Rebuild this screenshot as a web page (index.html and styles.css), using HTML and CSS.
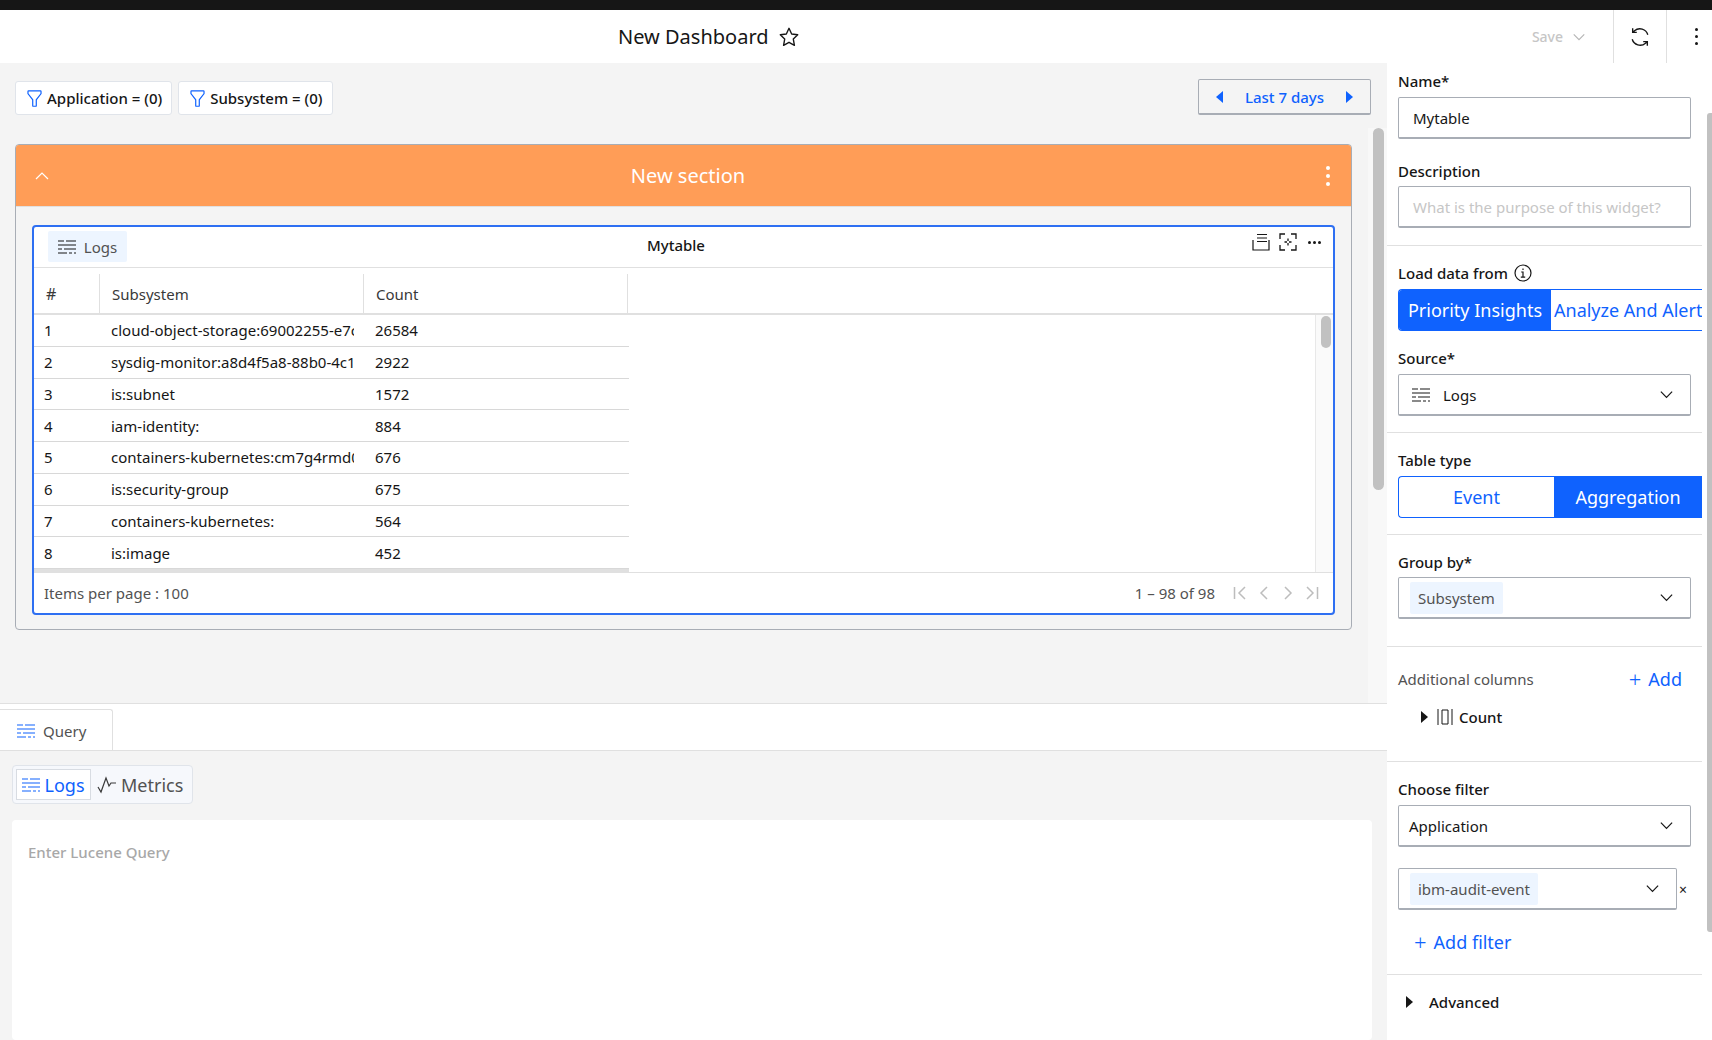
FILE: index.html
```html
<!DOCTYPE html>
<html lang="en">
<head>
  <meta charset="UTF-8" />
  <title>New Dashboard</title>
  <link rel="stylesheet" href="styles.css">
</head>
<body>
  <svg class="defs" width="0" height="0">
    <symbol id="i-logs" viewBox="0 0 18 16">
      <path d="M0 2h6M8 2h10M0 6h18M0 10h4M6 10h12M0 14h9M11 14h3M16 14h2" fill="none" stroke="currentColor" stroke-width="1.2"/>
    </symbol>
    <symbol id="i-filter" viewBox="0 0 32 32">
      <path d="M18 30h-4a2 2 0 0 1-2-2V18.4L4.6 9A2 2 0 0 1 4 7.6V4a2 2 0 0 1 2-2h20a2 2 0 0 1 2 2v3.6a2 2 0 0 1-.6 1.4L20 18.4V28a2 2 0 0 1-2 2ZM6 4v3.6l8 10V28h4V17.6l8-10V4Z" fill="currentColor"/>
    </symbol>
    <symbol id="i-chev" viewBox="0 0 16 16">
      <path d="M2 5l6 6 6-6" fill="none" stroke="currentColor" stroke-width="1.3"/>
    </symbol>
  </svg>

  <div class="topbar"></div>

  <header class="header">
    <h1 class="title">New Dashboard</h1>
    <svg class="star" viewBox="0 0 24 24"><path d="M12 2.5l2.9 6.2 6.6.9-4.8 4.7 1.2 6.8-5.9-3.3-5.9 3.3 1.2-6.8L2.5 9.6l6.6-.9z" fill="none" stroke="#161616" stroke-width="1.5" stroke-linejoin="round"/></svg>
    <div class="save">Save <svg class="save-chev"><use href="#i-chev"/></svg></div>
    <div class="head-btn">
      <svg class="renew" viewBox="0 0 24 24"><path d="M20.5 9.5A9 9 0 0 0 6 5.2L4 7M4 2.5V7h4.5M3.5 14.5A9 9 0 0 0 18 18.8l2-1.8M20 21.500V17h-4.500" fill="none" stroke="#161616" stroke-width="1.500"/></svg>
    </div>
    <div class="head-btn head-more"><span class="kebab"><i></i><i></i><i></i></span></div>
  </header>

  <div class="page">
    <main class="main">
      <section class="dash">
        <div class="toolbar">
          <div class="chip"><svg class="chip-icon"><use href="#i-filter"/></svg>Application = (0)</div>
          <div class="chip"><svg class="chip-icon"><use href="#i-filter"/></svg>Subsystem = (0)</div>
          <div class="date">
            <span class="tri tri-left"></span>
            <span class="date-text">Last 7 days</span>
            <span class="tri tri-right"></span>
          </div>
        </div>

        <div class="section">
          <div class="section-head">
            <svg class="section-chev" viewBox="0 0 16 16"><path d="M2 11l6-6 6 6" fill="none" stroke="#fff" stroke-width="1.200"/></svg>
            <span class="section-title">New section</span>
            <span class="kebab kebab-white"><i></i><i></i><i></i></span>
          </div>
          <div class="section-body">
            <div class="widget">
              <div class="widget-head">
                <div class="logs-tag"><svg class="logs-icon"><use href="#i-logs"/></svg>Logs</div>
                <div class="widget-title">Mytable</div>
                <div class="widget-tools">
                  <svg class="tool" viewBox="0 0 18 18"><path d="M5 1.500h10M5 5h10M5 8.500h10M1 7v10h16V7M1 12" fill="none" stroke="#161616" stroke-width="1.200"/></svg>
                  <svg class="tool" viewBox="0 0 18 18"><path d="M6 1H1v5M12 1h5v5M6 17H1v-5M12 17h5v-5M9 5.500v2.500M9 10v2.500M5.500 9H8M10 9h2.500" fill="none" stroke="#161616" stroke-width="1.300"/></svg>
                  <span class="dots"><i></i><i></i><i></i></span>
                </div>
              </div>
              <div class="thead">
                <div class="th th-num">#</div>
                <div class="th">Subsystem</div>
                <div class="th">Count</div>
              </div>
              <div class="tbody">
                <div class="rows">
                  <div class="row"><span class="c-num">1</span><span class="c-name">cloud-object-storage:69002255-e7c1-4a10</span><span class="c-count">26584</span></div>
                  <div class="row"><span class="c-num">2</span><span class="c-name">sysdig-monitor:a8d4f5a8-88b0-4c1e-9b21</span><span class="c-count">2922</span></div>
                  <div class="row"><span class="c-num">3</span><span class="c-name">is:subnet</span><span class="c-count">1572</span></div>
                  <div class="row"><span class="c-num">4</span><span class="c-name">iam-identity:</span><span class="c-count">884</span></div>
                  <div class="row"><span class="c-num">5</span><span class="c-name">containers-kubernetes:cm7g4rmd0abc</span><span class="c-count">676</span></div>
                  <div class="row"><span class="c-num">6</span><span class="c-name">is:security-group</span><span class="c-count">675</span></div>
                  <div class="row"><span class="c-num">7</span><span class="c-name">containers-kubernetes:</span><span class="c-count">564</span></div>
                  <div class="row"><span class="c-num">8</span><span class="c-name">is:image</span><span class="c-count">452</span></div>
                </div>
                <div class="table-track"><div class="table-thumb"></div></div>
              </div>
              <div class="tfoot">
                <span>Items per page : 100</span>
                <span class="range">1 – 98 of 98</span>
                <svg class="pager" viewBox="0 0 14 14"><path d="M1.500 1v12M12 1L6 7l6 6" fill="none" stroke="#bdbdbd" stroke-width="1.500"/></svg>
                <svg class="pager" viewBox="0 0 14 14"><path d="M10 1L4 7l6 6" fill="none" stroke="#bdbdbd" stroke-width="1.500"/></svg>
                <svg class="pager" viewBox="0 0 14 14"><path d="M4 1l6 6-6 6" fill="none" stroke="#bdbdbd" stroke-width="1.500"/></svg>
                <svg class="pager" viewBox="0 0 14 14"><path d="M12.500 1v12M2 1l6 6-6 6" fill="none" stroke="#bdbdbd" stroke-width="1.500"/></svg>
              </div>
            </div>
          </div>
        </div>
        <div class="dash-track"><div class="dash-thumb"></div></div>
      </section>

      <section class="query">
        <div class="tabbar">
          <div class="tab"><svg class="logs-icon blue"><use href="#i-logs"/></svg>Query</div>
        </div>
        <div class="query-body">
          <div class="switcher">
            <div class="switch switch-on"><svg class="logs-icon blue"><use href="#i-logs"/></svg>Logs</div>
            <div class="switch">
              <svg class="metrics-icon" viewBox="0 0 20 18"><path d="M1 11l3 5 5-14 3 8 2-3h5" fill="none" stroke="#393939" stroke-width="1.200"/></svg>Metrics
            </div>
          </div>
          <div class="query-box">Enter Lucene Query</div>
        </div>
      </section>
    </main>

    <aside class="panel">
      <div class="group g-name">
        <div class="label">Name*</div>
        <div class="input">Mytable</div>
        <div class="label label-next">Description</div>
        <div class="input placeholder">What is the purpose of this widget?</div>
      </div>

      <div class="group g-load">
        <div class="label">Load data from
          <svg class="info" viewBox="0 0 18 18"><circle cx="9" cy="9" r="8" fill="none" stroke="#161616" stroke-width="1.200"/><path d="M6.800 13.200h4.400M9 13V8H7.200M9 4.500v1.600" fill="none" stroke="#161616" stroke-width="1.200"/></svg>
        </div>
        <div class="toggle">
          <div class="opt opt-on opt-priority">Priority Insights</div>
          <div class="opt opt-analyze">Analyze And Alert</div>
        </div>
        <div class="label label-source">Source*</div>
        <div class="select"><svg class="logs-icon"><use href="#i-logs"/></svg><span class="select-logs">Logs</span><svg class="chev"><use href="#i-chev"/></svg></div>
      </div>

      <div class="group g-type">
        <div class="label">Table type</div>
        <div class="toggle">
          <div class="opt opt-event">Event</div>
          <div class="opt opt-on opt-agg">Aggregation</div>
        </div>
      </div>

      <div class="group g-by">
        <div class="label">Group by*</div>
        <div class="select select-tag"><span class="tag">Subsystem</span><svg class="chev"><use href="#i-chev"/></svg></div>
      </div>

      <div class="group g-cols">
        <div class="cols-head">
          <span class="cols-label">Additional columns</span>
          <span class="add"><span class="plus">+</span>Add</span>
        </div>
        <div class="col-row">
          <span class="tri tri-dark"></span>
          <svg class="col-icon" viewBox="0 0 16 16"><path d="M1 0v16M15 0v16M5 1h6v14H5z" fill="none" stroke="#161616" stroke-width="1"/></svg>
          Count
        </div>
      </div>

      <div class="group g-filter">
        <div class="label">Choose filter</div>
        <div class="select select-app">Application<svg class="chev"><use href="#i-chev"/></svg></div>
        <div class="filter-row">
          <div class="select select-tag select-short"><span class="tag">ibm-audit-event</span><svg class="chev"><use href="#i-chev"/></svg></div>
          <span class="remove">×</span>
        </div>
        <div class="add add-filter"><span class="plus">+</span>Add filter</div>
      </div>

      <div class="group g-adv">
        <span class="tri tri-dark"></span>
        <span class="adv-text">Advanced</span>
      </div>
      <div class="panel-thumb"></div>
    </aside>
  </div>
</body>
</html>
```

FILE: styles.css
```css
* {
  box-sizing: border-box;
}
html, body {
  margin: 0;
  height: 1040px;
  overflow: hidden;
}
body {
  font-family: "Noto Sans", Arial, sans-serif;
  font-size: 15px;
  color: #161616;
  background: #fff;
}
.defs {
  position: absolute;
}
.topbar {
  height: 10px;
  background: #161616;
}

/* header */
.header {
  height: 53px;
  display: flex;
  align-items: center;
  padding-left: 618px;
  background: #fff;
}
.title {
  margin: 0;
  font-size: 20px;
  font-weight: 400;
}
.star {
  width: 22px;
  height: 22px;
  margin-left: 9px;
}
.save {
  margin-left: auto;
  margin-right: 27px;
  display: flex;
  align-items: center;
  gap: 9px;
  color: #c6c6c6;
  font-size: 14px;
  font-weight: 500;
}
.save-chev {
  width: 14px;
  height: 14px;
  color: #b5b5b5;
}
.head-btn {
  width: 53px;
  height: 53px;
  display: flex;
  align-items: center;
  justify-content: center;
  border-left: 1px solid #e0e0e0;
}
.head-more {
  width: 46px;
  padding-left: 13px;
}
.renew {
  width: 22px;
  height: 22px;
}
.kebab {
  display: flex;
  flex-direction: column;
  gap: 4px;
}
.kebab i {
  width: 3px;
  height: 3px;
  border-radius: 50%;
  background: #161616;
}
.kebab-white i {
  width: 4px;
  height: 4px;
  background: #fff;
}

/* page */
.page {
  height: 977px;
  display: flex;
}
.main {
  width: 1387px;
  display: flex;
  flex-direction: column;
  background: #f4f4f4;
}
.dash {
  position: relative;
  height: 655px;
}
.toolbar {
  display: flex;
  align-items: flex-start;
  gap: 6px;
  padding: 16px 16px 29px 15px;
}
.chip {
  height: 34px;
  margin-top: 2px;
  padding: 0 9px;
  display: flex;
  align-items: center;
  gap: 3px;
  background: #fff;
  border: 1px solid #e0e4ea;
  border-radius: 3px;
  font-weight: 500;
}
.chip-icon {
  width: 19px;
  height: 19px;
  color: #0f62fe;
}
.date {
  width: 173px;
  height: 36px;
  margin-left: auto;
  padding: 0 17px;
  display: flex;
  align-items: center;
  justify-content: space-between;
  border: 1px solid #a8adb5;
  border-bottom-width: 2px;
  border-radius: 2px;
}
.date-text {
  color: #0f62fe;
  font-weight: 500;
}
.tri {
  width: 0;
  height: 0;
  border-style: solid;
  border-color: transparent;
}
.tri-left {
  border-width: 6px 7px 6px 0;
  border-right-color: #0f62fe;
}
.tri-right {
  border-width: 6px 0 6px 7px;
  border-left-color: #0f62fe;
}
.tri-dark {
  border-width: 6px 0 6px 7px;
  border-left-color: #161616;
}

/* section */
.section {
  margin: 0 35px 0 15px;
  height: 486px;
  border: 1px solid #a8adb5;
  border-radius: 4px;
}
.section-head {
  height: 62px;
  padding: 0 21px 0 18px;
  display: flex;
  align-items: center;
  justify-content: space-between;
  background: #ff9d57;
  border-radius: 3px 3px 0 0;
  border-bottom: 1px solid #e0e0e0;
}
.section-chev {
  width: 16px;
  height: 16px;
}
.section-title {
  color: #fff;
  font-size: 20px;
}
.section-body {
  padding: 18px 16px 0;
}
.widget {
  height: 390px;
  background: #fff;
  border: 2px solid #2e6ff2;
  border-radius: 4px;
}
.widget-head {
  height: 41px;
  padding: 4px 12px 0 14px;
  display: flex;
  align-items: flex-start;
  border-bottom: 1px solid #e0e0e0;
}
.logs-tag {
  width: 79px;
  height: 31px;
  display: flex;
  align-items: center;
  justify-content: center;
  gap: 8px;
  background: #edf5ff;
  border-radius: 2px;
  color: #525252;
}
.logs-icon {
  width: 18px;
  height: 16px;
  flex: none;
  color: #161616;
}
.logs-icon.blue {
  color: #0f62fe;
}
.widget-title {
  margin: 4px 0 0 520px;
  font-weight: 500;
}
.widget-tools {
  margin-left: auto;
  padding-top: 2px;
  display: flex;
  align-items: center;
  gap: 9px;
}
.tool {
  width: 18px;
  height: 18px;
}
.dots {
  display: flex;
  gap: 2px;
  margin-left: 2px;
}
.dots i {
  width: 3px;
  height: 3px;
  border-radius: 50%;
  background: #161616;
}

/* table */
.thead {
  height: 47px;
  padding-top: 6px;
  display: grid;
  grid-template-columns: 66px 264px 264px;
  border-bottom: 2px solid #e0e0e0;
}
.th {
  padding: 0 0 0 12px;
  display: flex;
  align-items: center;
  border-right: 1px solid #e0e0e0;
  color: #393939;
}
.th-num {
  font-size: 16px;
}
.tbody {
  height: 258px;
  display: flex;
  justify-content: space-between;
  border-bottom: 1px solid #e0e0e0;
}
.rows {
  width: 595px;
  border-bottom: 3px solid #e0e0e0;
}
.row {
  height: 31.75px;
  display: grid;
  grid-template-columns: 66px 264px 1fr;
  align-items: center;
  border-bottom: 1px solid #d8d8d8;
}
.c-num {
  padding-left: 10px;
}
.c-name {
  width: 254px;
  padding-left: 11px;
  overflow: hidden;
  white-space: nowrap;
}
.c-count {
  padding-left: 11px;
}
.table-track {
  width: 18px;
  padding: 1px 3px 0 5px;
  border-left: 1px solid #e8e8e8;
  background: #fafafa;
}
.table-thumb {
  width: 10px;
  height: 32px;
  border-radius: 5px;
  background: #c1c1c1;
}
.tfoot {
  height: 40px;
  padding: 0 14px 0 10px;
  display: flex;
  align-items: center;
  color: #525252;
}
.range {
  margin-left: auto;
  margin-right: 8px;
}
.pager {
  width: 14px;
  height: 14px;
  margin-left: 10px;
}
.dash-track {
  position: absolute;
  top: 65px;
  right: 0;
  bottom: 0;
  width: 19px;
  padding-left: 5px;
  background: #f8f8f8;
}
.dash-thumb {
  width: 11px;
  height: 362px;
  border-radius: 6px;
  background: #c1c1c1;
}

/* query */
.query {
  flex: 1;
  display: flex;
  flex-direction: column;
}
.tabbar {
  height: 48px;
  padding-top: 5px;
  background: #fff;
  border-top: 1px solid #e0e0e0;
  border-bottom: 1px solid #e0e0e0;
}
.tab {
  width: 113px;
  height: 42px;
  padding-left: 17px;
  display: flex;
  align-items: center;
  gap: 8px;
  border: 1px solid #e0e0e0;
  border-width: 1px 1px 0 0;
  border-radius: 0 3px 0 0;
  color: #525252;
}
.query-body {
  flex: 1;
  padding: 14px 15px 0 12px;
}
.switcher {
  width: 181px;
  height: 39px;
  padding: 3px;
  display: flex;
  gap: 6px;
  background: #f6f8fc;
  border: 1px solid #e0e4ea;
  border-radius: 4px;
  font-size: 18px;
  color: #525252;
}
.switch {
  display: flex;
  align-items: center;
  gap: 4px;
}
.switch-on {
  width: 75px;
  justify-content: center;
  background: #fff;
  border: 1px solid #d8dce2;
  color: #0f62fe;
}
.metrics-icon {
  width: 20px;
  height: 18px;
}
.query-box {
  height: 220px;
  margin-top: 16px;
  padding: 22px 16px;
  background: #fff;
  border-radius: 4px;
  color: #a8a8a8;
  font-weight: 500;
}

/* side panel */
.panel {
  position: relative;
  width: 325px;
  padding-right: 10px;
  background: #fff;
}
.group {
  padding: 15px 11px 16px;
  border-bottom: 1px solid #e0e0e0;
}
.label {
  height: 24px;
  display: flex;
  align-items: center;
  gap: 6px;
  font-weight: 500;
}
.input, .select {
  width: 293px;
  height: 42px;
  display: flex;
  align-items: center;
  border: 1px solid #a8adb5;
  border-bottom-width: 2px;
  border-radius: 2px;
}
.input {
  margin-top: 4px;
  padding-left: 14px;
}
.placeholder {
  margin-top: 3px;
  color: #c6c6c6;
}
.g-name {
  padding-top: 6px;
  padding-bottom: 17px;
}
.label-next {
  margin-top: 20px;
}
.info {
  width: 18px;
  height: 18px;
}
.toggle {
  height: 42px;
  margin-top: 4px;
  margin-right: -11px;
  display: flex;
  overflow: hidden;
  border: 1px solid #0f62fe;
  border-right: 0;
  border-radius: 4px 0 0 4px;
  font-size: 18px;
  color: #0f62fe;
  white-space: nowrap;
}
.opt {
  display: flex;
  align-items: center;
  justify-content: center;
}
.opt-on {
  background: #0f62fe;
  color: #fff;
}
.opt-priority {
  width: 152px;
  flex: none;
}
.opt-analyze {
  padding-left: 3px;
}
.opt-event {
  width: 155px;
  flex: none;
}
.opt-agg {
  flex: 1;
}
.label-source {
  margin-top: 15px;
}
.select {
  margin-top: 4px;
  padding: 0 11px 0 13px;
}
.select-logs {
  margin-left: 13px;
}
.chev {
  width: 15px;
  height: 15px;
  margin-left: auto;
  margin-right: 5px;
}
.g-by {
  padding-bottom: 27px;
}
.select-tag {
  margin-top: 3px;
  padding-left: 11px;
}
.tag {
  height: 32px;
  padding: 0 8px;
  display: flex;
  align-items: center;
  background: #edf5ff;
  border-radius: 2px;
  color: #525252;
}
.g-cols {
  padding-top: 20px;
  padding-bottom: 32px;
}
.cols-head {
  height: 24px;
  padding-right: 9px;
  display: flex;
  align-items: center;
  justify-content: space-between;
}
.cols-label {
  color: #525252;
}
.add {
  display: flex;
  align-items: center;
  gap: 7px;
  color: #0f62fe;
  font-size: 18px;
}
.plus {
  font-size: 22px;
  line-height: 1;
  font-weight: 300;
}
.col-row {
  height: 24px;
  margin-top: 14px;
  padding-left: 23px;
  display: flex;
  align-items: center;
  font-weight: 500;
}
.col-icon {
  width: 16px;
  height: 16px;
  margin: 0 6px 0 9px;
}
.select-app {
  padding-left: 10px;
}
.filter-row {
  margin-top: 21px;
  display: flex;
  align-items: center;
}
.select-short {
  width: 279px;
  margin-top: 0;
}
.remove {
  margin-left: 2px;
  font-size: 14px;
}
.add-filter {
  height: 24px;
  margin-top: 20px;
  padding-left: 16px;
}
.g-filter {
  padding-bottom: 20px;
}
.g-adv {
  padding-top: 17px;
  display: flex;
  align-items: center;
  border-bottom: 0;
}
.g-adv .tri {
  margin-left: 8px;
}
.adv-text {
  margin-left: 16px;
  font-weight: 500;
}
.panel-thumb {
  position: absolute;
  top: 50px;
  right: 0;
  width: 5px;
  height: 819px;
  border-radius: 3px 0 0 3px;
  background: #c1c1c1;
}
```
